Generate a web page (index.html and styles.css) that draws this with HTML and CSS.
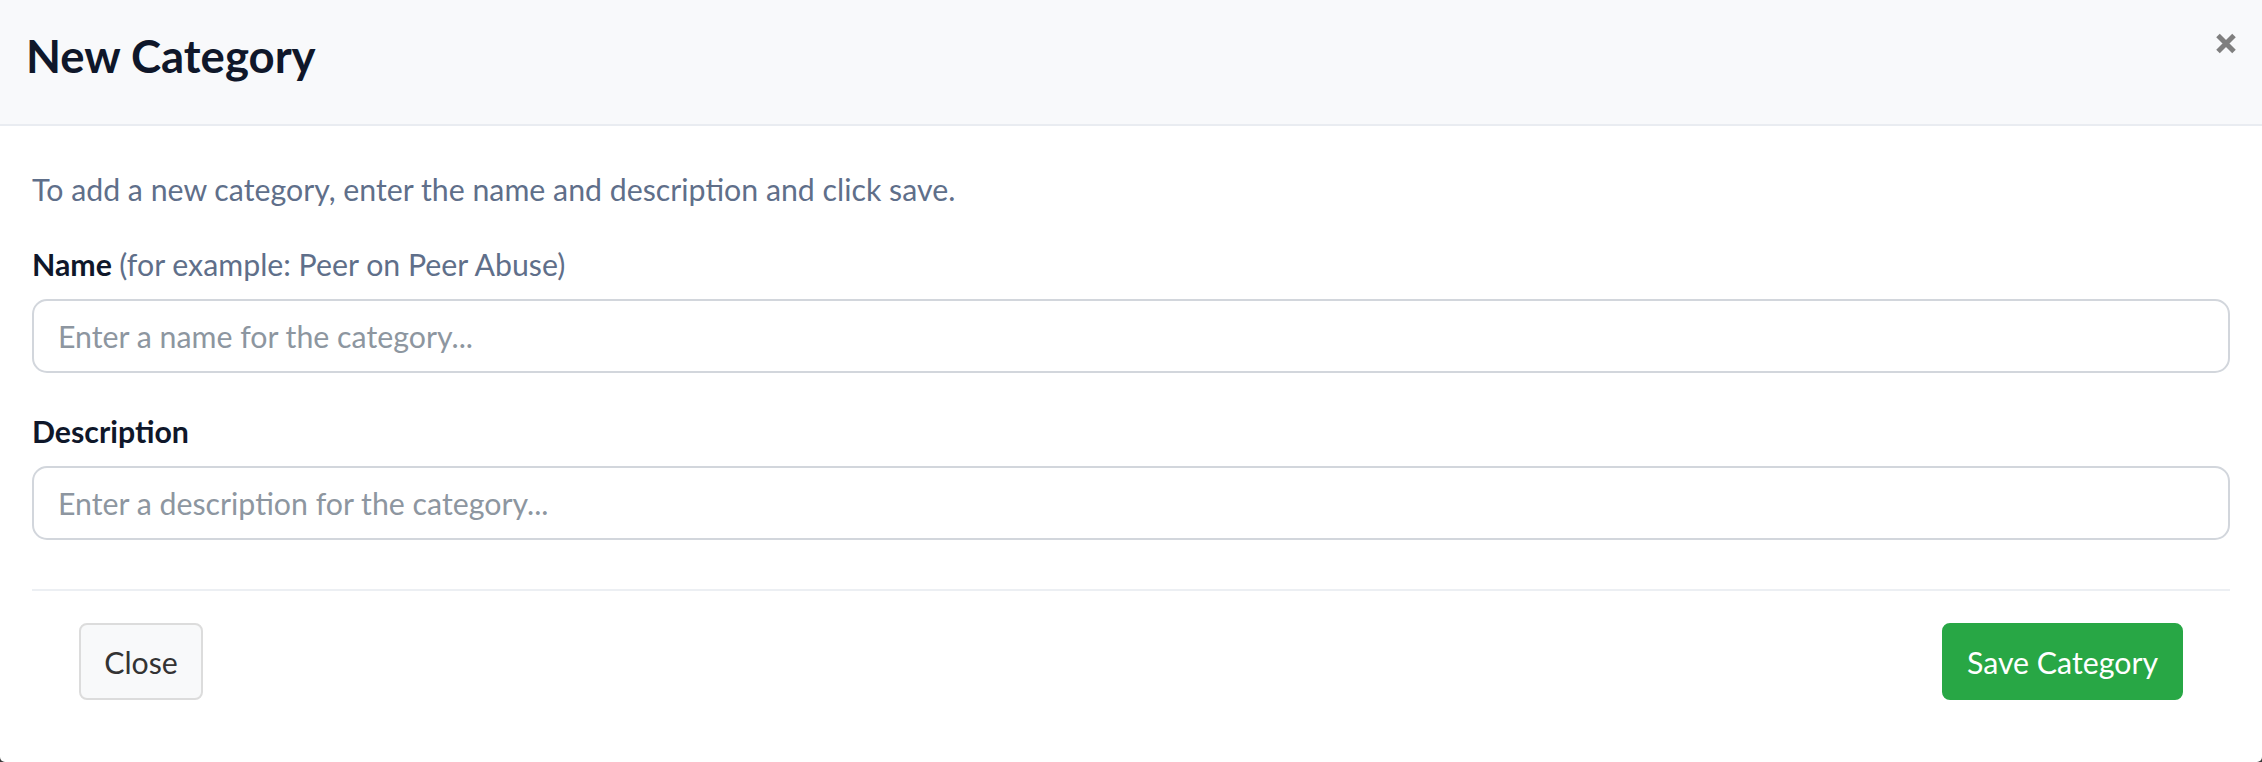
FILE: index.html
```html
<!DOCTYPE html>
<html lang="en">
<head>
<meta charset="utf-8">
<title>New Category</title>
<link rel="stylesheet" href="styles.css">
</head>
<body>
<div class="modal">
  <div class="modal-header">
    <h1 class="modal-title">New Category</h1>
    <button class="close-x" aria-label="Close">
      <svg width="22" height="21" viewBox="0 0 22 21"><path d="M3 2.5 L19 18.5 M19 2.5 L3 18.5" stroke="#7f7f7f" stroke-width="5" stroke-linecap="butt"/></svg>
    </button>
  </div>
  <div class="modal-body">
    <p class="intro">To add a new category, enter the name and description and click save.</p>
    <label class="field-label">Name <span class="hint">(for example: Peer on Peer Abuse)</span></label>
    <input class="field" type="text" placeholder="Enter a name for the category...">
    <label class="field-label">Description</label>
    <input class="field" type="text" placeholder="Enter a description for the category...">
    <div class="divider"></div>
    <div class="modal-footer">
      <button class="btn btn-close">Close</button>
      <button class="btn btn-save">Save Category</button>
    </div>
  </div>
</div>
</body>
</html>
```
FILE: styles.css
```css
html, body {
  margin: 0;
  padding: 0;
  background: #3a3a3a;
}
body {
  font-family: "Lato", "Liberation Sans", sans-serif;
  width: 2262px;
  height: 762px;
  overflow: hidden;
}
.modal {
  background: #ffffff;
  height: 762px;
  border-radius: 0 0 5px 5px;
  display: flex;
  flex-direction: column;
}
.modal-header {
  background: #f8f9fb;
  height: 124px;
  border-bottom: 2px solid #e9ecf1;
  display: flex;
  align-items: flex-start;
  justify-content: space-between;
  padding: 0 25px 0 26px;
}
.modal-title {
  margin: 0;
  margin-top: 25px;
  font-size: 45.5px;
  line-height: 62px;
  font-weight: 700;
  color: #0f172a;
}
.close-x {
  margin-top: 33px;
  padding: 0;
  border: 0;
  background: transparent;
  width: 22px;
  height: 21px;
  display: flex;
}
.modal-body {
  padding: 0 32px;
  display: flex;
  flex-direction: column;
}
.intro {
  margin: 41px 0 0;
  font-size: 30.3px;
  line-height: 44px;
  color: #5f6f8a;
}
.field-label {
  margin-top: 31px;
  font-size: 30.3px;
  line-height: 44px;
  font-weight: 700;
  color: #0f172a;
}
.hint {
  font-weight: 400;
  color: #5f6f8a;
}
.field {
  margin-top: 13px;
  height: 74px;
  box-sizing: border-box;
  border: 2px solid #d2d6dc;
  border-radius: 15px;
  padding: 0 24px;
  font-family: inherit;
  font-size: 30.3px;
  color: #333;
  background: #fff;
  outline: none;
}
.field::placeholder {
  color: #8d96a0;
}
.field + .field-label {
  margin-top: 36px;
}
.divider {
  margin-top: 49px;
  height: 2px;
  background: #eceff3;
}
.modal-footer {
  display: flex;
  justify-content: space-between;
  padding: 32px 47px 0;
}
.btn {
  height: 77px;
  box-sizing: border-box;
  font-family: inherit;
  font-size: 30.3px;
  border-radius: 8px;
  padding: 0;
}
.btn-close {
  width: 124px;
  background: #f8f9fa;
  border: 2px solid #dcdcdc;
  color: #333333;
}
.btn-save {
  width: 241px;
  background: #28a745;
  border: 2px solid #28a745;
  color: #ffffff;
}
```
